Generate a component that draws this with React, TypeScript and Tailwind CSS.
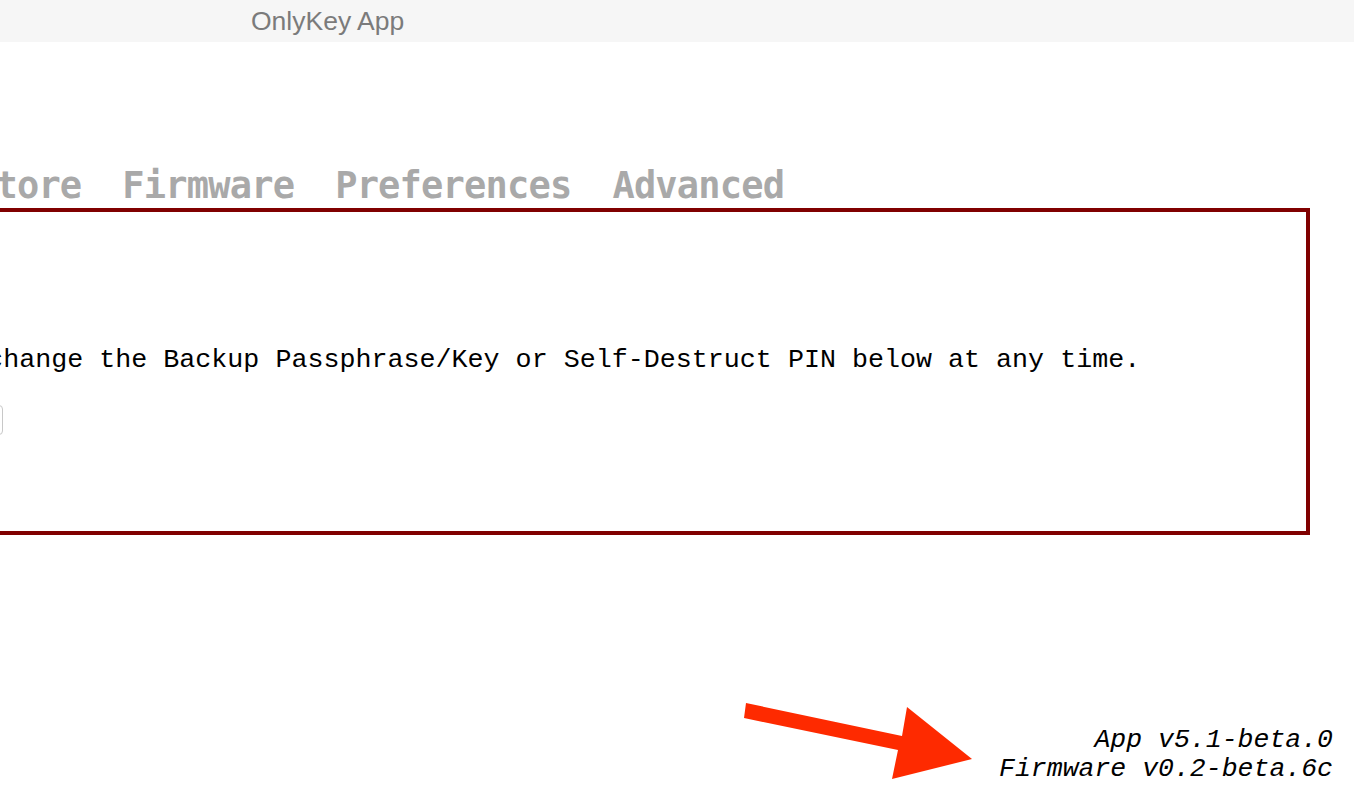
import React from "react";

export default function App() {
  return (
    <div className="relative w-[1354px] h-[796px] overflow-hidden bg-white">
      {/* title bar */}
      <div className="h-[42px] bg-[#f6f6f6] flex items-center pl-[251px]">
        <span className="text-[26.5px] leading-[42px] text-[#7b7b7b] [font-family:'Liberation_Sans',Arial,sans-serif]">
          OnlyKey App
        </span>
      </div>

      {/* tabs */}
      <div className="mt-[125px] ml-[-69px] flex gap-[41px] whitespace-nowrap text-[37px] leading-[37px] h-[37px] font-bold tracking-[-0.8px] text-[#a9a9a9] [font-family:'DejaVu_Sans_Mono',monospace]">
        <span>Restore</span>
        <span>Firmware</span>
        <span>Preferences</span>
        <span>Advanced</span>
      </div>

      {/* panel */}
      <div className="mt-[4px] ml-[-400px] w-[1710px] h-[327px] border-4 border-[#800000] flex flex-col">
        <p className="mt-[132px] pl-[255px] whitespace-nowrap text-[26.7px] leading-[32px] text-black [font-family:'Liberation_Mono','Courier_New',monospace]">
          You can change the Backup Passphrase/Key or Self-Destruct PIN below at any time.
        </p>
        <div className="mt-[29px] ml-[99px]">
          <input
            type="text"
            className="block w-[300px] h-[30px] rounded-[4px] border border-[#c8c8c8] bg-white outline-none"
          />
        </div>
      </div>

      {/* versions */}
      <div className="mt-[191px] pr-[21px] flex flex-col items-end text-[26.5px] leading-[29px] italic text-black whitespace-nowrap [font-family:'Liberation_Mono','Courier_New',monospace]">
        <span>App v5.1-beta.0</span>
        <span>Firmware v0.2-beta.6c</span>
      </div>

      {/* annotation arrow */}
      <svg
        className="absolute left-0 top-0 pointer-events-none"
        width="1354"
        height="796"
        viewBox="0 0 1354 796"
      >
        <polygon
          points="746,703 902,736 907,707 972,759 892,779 898,750 744,718"
          fill="#fe2a00"
        />
      </svg>
    </div>
  );
}
